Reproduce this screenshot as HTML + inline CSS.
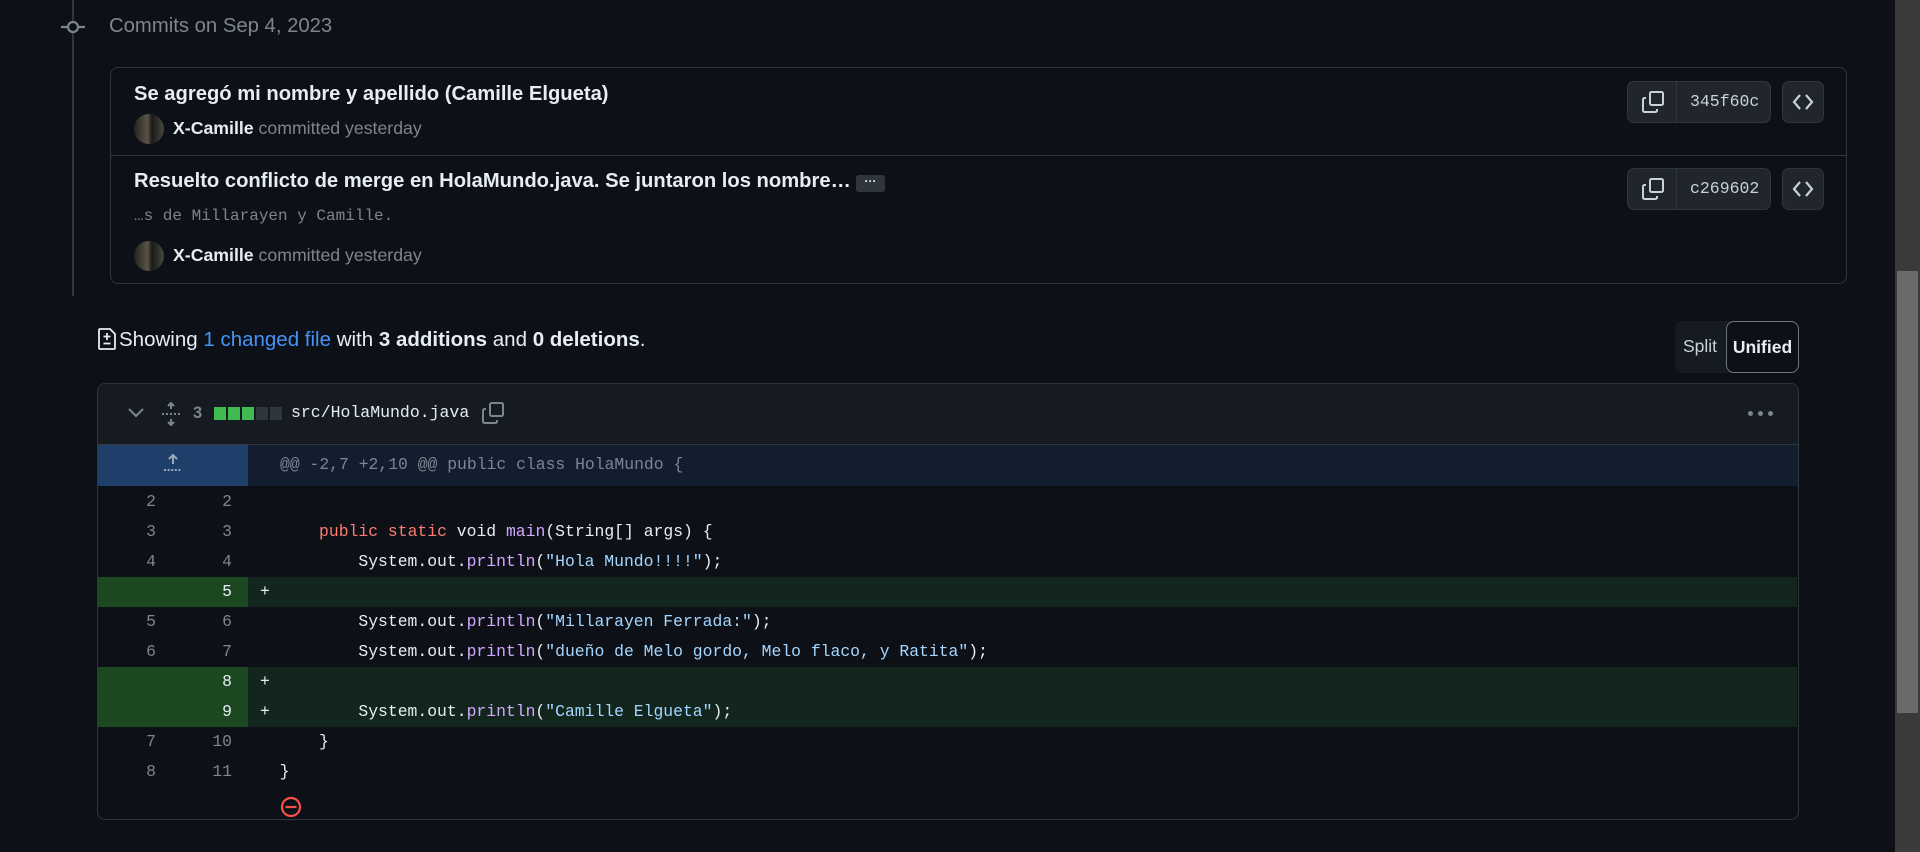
<!DOCTYPE html>
<html><head><meta charset="utf-8"><style>
*{margin:0;padding:0;box-sizing:border-box}
body{width:1920px;height:852px;background:#0d1117;position:relative;overflow:hidden;font-family:"Liberation Sans",sans-serif;color:#e6edf3}
.a{position:absolute}
.mono{font-family:"Liberation Mono",monospace}
.btn{position:absolute;border:1px solid #30363d;background:#21262d;border-radius:7px}
.row{position:absolute;left:98px;width:1699px;height:30px;font-family:"Liberation Mono",monospace;font-size:16.4px;line-height:30px;white-space:pre}
.row .o{position:absolute;left:0;width:58px;text-align:right;color:#7d8590}
.row .n{position:absolute;left:80px;width:54px;text-align:right;color:#7d8590}
.row .g{position:absolute;left:0;top:0;width:150px;height:30px}
.row .c{position:absolute;left:162px;color:#e6edf3}
.add{background:#12261e}
.add .g{background:#1b4721}
.add .n{color:#e6edf3}
.k{color:#ff7b72}.f{color:#d2a8ff}.s{color:#a5d6ff}
</style></head><body>
<div class="a" style="left:72px;top:0;width:2px;height:296px;background:#30363d"></div>
<svg class="a" style="left:61px;top:17px" width="24" height="20" viewBox="0 0 24 20"><circle cx="12" cy="10" r="5" fill="#0d1117" stroke="#7d8590" stroke-width="2.2"/><path d="M0 10h7M17 10h7" stroke="#7d8590" stroke-width="2.2"/></svg>
<div class="a" style="left:109px;top:15px;font-size:20.3px;color:#7d8590">Commits on Sep 4, 2023</div>
<div class="a" style="left:110px;top:67px;width:1737px;height:217px;border:1px solid #30363d;border-radius:8px"></div>
<div class="a" style="left:111px;top:155px;width:1735px;height:1px;background:#30363d"></div>
<div class="a" style="left:134px;top:83px;font-size:20.2px;font-weight:bold">Se agregó mi nombre y apellido (Camille Elgueta)</div>
<div class="a" style="left:134px;top:114px;width:30px;height:30px;border-radius:50%;background:linear-gradient(90deg,#222 0%,#5a5446 45%,#1a1a1a 60%,#4a473e 100%)"></div>
<div class="a" style="left:173px;top:118px;font-size:17.7px"><b>X-Camille</b> <span style="color:#7d8590">committed yesterday</span></div>
<div class="a" style="left:134px;top:170px;font-size:20.2px;font-weight:bold">Resuelto conflicto de merge en HolaMundo.java. Se juntaron los nombre…</div>
<div class="a" style="left:856px;top:175px;width:29px;height:17px;background:#30363d;border-radius:3px;color:#e6edf3;font-size:12px;text-align:center;line-height:12px;font-weight:bold">···</div>
<div class="a mono" style="left:134px;top:207px;font-size:16px;color:#7d8590">…s de Millarayen y Camille.</div>
<div class="a" style="left:134px;top:241px;width:30px;height:30px;border-radius:50%;background:linear-gradient(90deg,#222 0%,#5a5446 45%,#1a1a1a 60%,#4a473e 100%)"></div>
<div class="a" style="left:173px;top:245px;font-size:17.7px"><b>X-Camille</b> <span style="color:#7d8590">committed yesterday</span></div>
<div class="btn" style="left:1627px;top:81px;width:144px;height:42px"><div class="a" style="left:48px;top:0;width:1px;height:40px;background:#30363d"></div>
<svg class="a" style="left:13px;top:8px" width="24" height="24" viewBox="0 0 24 24" fill="none" stroke="#c9d1d9" stroke-width="2"><rect x="9" y="2" width="13" height="13" rx="1.5"/><path d="M5 8H3.5A1.5 1.5 0 0 0 2 9.5v11A1.5 1.5 0 0 0 3.5 22h11a1.5 1.5 0 0 0 1.5-1.5V19"/></svg>
<div class="a mono" style="left:62px;top:10px;font-size:16.5px;color:#c9d1d9">345f60c</div></div>
<div class="btn" style="left:1782px;top:81px;width:42px;height:42px"><svg class="a" style="left:9px;top:10px" width="22" height="20" viewBox="0 0 22 20" fill="none" stroke="#c9d1d9" stroke-width="2.2"><path d="M8 3 2 10l6 7M14 3l6 7-6 7"/></svg></div>
<div class="btn" style="left:1627px;top:168px;width:144px;height:42px"><div class="a" style="left:48px;top:0;width:1px;height:40px;background:#30363d"></div>
<svg class="a" style="left:13px;top:8px" width="24" height="24" viewBox="0 0 24 24" fill="none" stroke="#c9d1d9" stroke-width="2"><rect x="9" y="2" width="13" height="13" rx="1.5"/><path d="M5 8H3.5A1.5 1.5 0 0 0 2 9.5v11A1.5 1.5 0 0 0 3.5 22h11a1.5 1.5 0 0 0 1.5-1.5V19"/></svg>
<div class="a mono" style="left:62px;top:10px;font-size:16.5px;color:#c9d1d9">c269602</div></div>
<div class="btn" style="left:1782px;top:168px;width:42px;height:42px"><svg class="a" style="left:9px;top:10px" width="22" height="20" viewBox="0 0 22 20" fill="none" stroke="#c9d1d9" stroke-width="2.2"><path d="M8 3 2 10l6 7M14 3l6 7-6 7"/></svg></div>
<svg class="a" style="left:97px;top:328px" width="20" height="22" viewBox="0 0 20 22" fill="none" stroke="#e6edf3" stroke-width="1.8"><path d="M3 1h10l5 5v14a1 1 0 0 1-1 1H3a1 1 0 0 1-1-1V2a1 1 0 0 1 1-1z"/><path d="M10 5v7M6.5 8.5h7M6.5 15.5h7"/></svg>
<div class="a" style="left:119px;top:328px;font-size:20.5px">Showing <span style="color:#4493f8">1 changed file</span> with <b>3 additions</b> and <b>0 deletions</b>.</div>
<div class="a" style="left:1675px;top:321px;width:124px;height:52px;background:#161b22;border-radius:8px"></div>
<div class="a" style="left:1683px;top:336px;font-size:17.5px;color:#c9d1d9">Split</div>
<div class="a" style="left:1726px;top:321px;width:73px;height:52px;border:1px solid #6e7681;border-radius:8px;background:#0d1117;font-size:17.5px;font-weight:bold;color:#e6edf3;text-align:center;line-height:50px">Unified</div>
<div class="a" style="left:97px;top:383px;width:1702px;height:437px;border:1px solid #30363d;border-radius:8px;overflow:hidden">
<div class="a" style="left:0;top:0;width:1700px;height:61px;background:#161b22;border-bottom:1px solid #30363d"></div>
</div>
<svg class="a" style="left:127px;top:406px" width="18" height="14" viewBox="0 0 18 14" fill="none" stroke="#7d8590" stroke-width="2"><path d="M2 3l7 7 7-7"/></svg>
<svg class="a" style="left:160px;top:402px" width="22" height="24" viewBox="0 0 22 24" fill="none" stroke="#7d8590" stroke-width="2"><path d="M11 1v6M8 4l3-3 3 3M11 23v-6M8 20l3 3 3-3"/><path d="M2 12h18" stroke-dasharray="2 2"/></svg>
<div class="a" style="left:193px;top:404px;font-size:16.5px;font-weight:bold;color:#7d8590">3</div>
<div class="a" style="left:214px;top:407px;width:68px;height:13px;display:flex;gap:2px"><i style="flex:1;background:#3fb950"></i><i style="flex:1;background:#3fb950"></i><i style="flex:1;background:#3fb950"></i><i style="flex:1;background:#30363d"></i><i style="flex:1;background:#30363d"></i></div>
<div class="a mono" style="left:291px;top:403px;font-size:16.5px;color:#e6edf3">src/HolaMundo.java</div>
<svg class="a" style="left:481px;top:401px" width="24" height="24" viewBox="0 0 24 24" fill="none" stroke="#7d8590" stroke-width="2"><rect x="9" y="2" width="13" height="13" rx="1.5"/><path d="M5 8H3.5A1.5 1.5 0 0 0 2 9.5v11A1.5 1.5 0 0 0 3.5 22h11a1.5 1.5 0 0 0 1.5-1.5V19"/></svg>
<div class="a" style="left:1748px;top:411px;display:flex;gap:5px"><i style="width:5px;height:5px;border-radius:50%;background:#7d8590"></i><i style="width:5px;height:5px;border-radius:50%;background:#7d8590"></i><i style="width:5px;height:5px;border-radius:50%;background:#7d8590"></i></div>
<div class="a" style="left:98px;top:445px;width:1700px;height:41px;background:#121d2f"></div>
<div class="a" style="left:98px;top:445px;width:150px;height:41px;background:#1f3f6b"></div>
<svg class="a" style="left:163px;top:453px" width="20" height="22" viewBox="0 0 20 22" fill="none" stroke="#9aa8b8" stroke-width="2"><path d="M10 2v9M6 6l4-4 4 4"/><path d="M1 17h18" stroke-dasharray="2 1.6"/></svg>
<div class="a mono" style="left:280px;top:455px;font-size:16.4px;color:#7d8590;white-space:pre">@@ -2,7 +2,10 @@ public class HolaMundo {</div>
<div class="row" style="top:487px"><span class="o">2</span><span class="n">2</span></div>
<div class="row" style="top:517px"><span class="o">3</span><span class="n">3</span><span class="c">      <span class="k">public</span> <span class="k">static</span> void <span class="f">main</span>(String[] args) {</span></div>
<div class="row" style="top:547px"><span class="o">4</span><span class="n">4</span><span class="c">          System.out.<span class="f">println</span>(<span class="s">"Hola Mundo!!!!"</span>);</span></div>
<div class="row add" style="top:577px"><span class="g"></span><span class="n">5</span><span class="c">+</span></div>
<div class="row" style="top:607px"><span class="o">5</span><span class="n">6</span><span class="c">          System.out.<span class="f">println</span>(<span class="s">"Millarayen Ferrada:"</span>);</span></div>
<div class="row" style="top:637px"><span class="o">6</span><span class="n">7</span><span class="c">          System.out.<span class="f">println</span>(<span class="s">"dueño de Melo gordo, Melo flaco, y Ratita"</span>);</span></div>
<div class="row add" style="top:667px"><span class="g"></span><span class="n">8</span><span class="c">+</span></div>
<div class="row add" style="top:697px"><span class="g"></span><span class="n">9</span><span class="c">+         System.out.<span class="f">println</span>(<span class="s">"Camille Elgueta"</span>);</span></div>
<div class="row" style="top:727px"><span class="o">7</span><span class="n">10</span><span class="c">      }</span></div>
<div class="row" style="top:757px"><span class="o">8</span><span class="n">11</span><span class="c">  }</span></div>
<svg class="a" style="left:280px;top:796px" width="22" height="22" viewBox="0 0 22 22" fill="none" stroke="#f85149" stroke-width="2.2"><circle cx="11" cy="11" r="9"/><path d="M5.5 11h11"/></svg>
<div class="a" style="left:1895px;top:0;width:25px;height:852px;background:#3a3a3a"></div>
<div class="a" style="left:1897px;top:271px;width:21px;height:442px;background:#6b6b6b"></div>
</body></html>
